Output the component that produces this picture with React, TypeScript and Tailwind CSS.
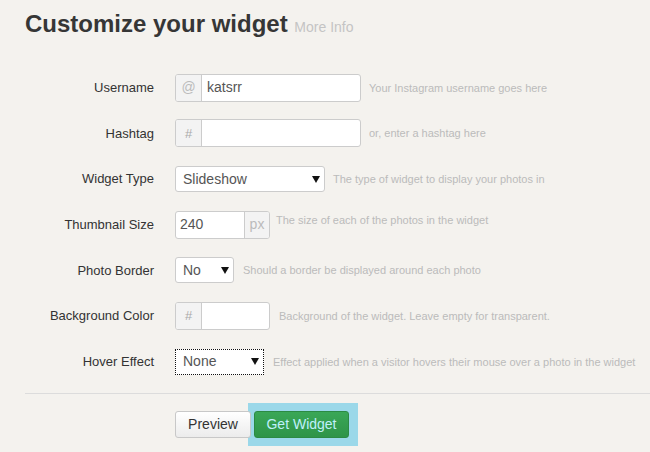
import React from "react";

const font = { fontFamily: '"Liberation Sans", Arial, sans-serif' };

function Arrow() {
  return (
    <svg width="8" height="7" viewBox="0 0 8 7" className="shrink-0">
      <path d="M0 0 H8 L4 7 Z" fill="#111" />
    </svg>
  );
}

function Row({ label, children }: { label: string; children: React.ReactNode }) {
  return (
    <div className="flex h-[45.67px] items-center">
      <div className="w-[129px] text-right text-[13px] text-[#333]">{label}</div>
      <div className="ml-[21px] flex items-center">{children}</div>
    </div>
  );
}

function Hint({ children, className = "" }: { children: React.ReactNode; className?: string }) {
  return <span className={"text-[11px] text-[#bbbbbb] " + className}>{children}</span>;
}

export default function App() {
  return (
    <div style={font} className="min-h-[452px] w-[650px] overflow-hidden bg-[#f4f2ee]">
      <div className="pl-[25px]">
        <h1 className="pt-[11px] text-[24px] font-bold leading-[26px] text-[#363636]">
          Customize your widget{" "}
          <span className="text-[14px] font-normal text-[#c4c4c4]">More Info</span>
        </h1>
        <div className="mt-[25px]">
          <Row label="Username">
            <div className="flex h-[28px] w-[186px] overflow-hidden rounded-[3px] border border-[#cccccc] bg-white">
              <div className="flex w-[26px] items-center justify-center border-r border-[#cccccc] bg-[#f3f3f3] text-[14px] text-[#bbbbbb]">@</div>
              <div className="flex items-center pl-[5px] text-[14px] text-[#555]">katsrr</div>
            </div>
            <Hint className="ml-[8px]">Your Instagram username goes here</Hint>
          </Row>
          <Row label="Hashtag">
            <div className="flex h-[28px] w-[186px] overflow-hidden rounded-[3px] border border-[#cccccc] bg-white">
              <div className="flex w-[26px] items-center justify-center border-r border-[#cccccc] bg-[#f3f3f3] text-[13px] text-[#aaaaaa]">#</div>
              <div className="flex-1" />
            </div>
            <Hint className="ml-[8px]">or, enter a hashtag here</Hint>
          </Row>
          <Row label="Widget Type">
            <div className="flex h-[26px] w-[150px] items-center justify-between rounded-[3px] border border-[#cccccc] bg-white pl-[7px] pr-[4px] text-[14px] text-[#555]">
              <span>Slideshow</span>
              <Arrow />
            </div>
            <Hint className="ml-[8px]">The type of widget to display your photos in</Hint>
          </Row>
          <Row label="Thumbnail Size">
            <div className="flex h-[28px] w-[95px] overflow-hidden rounded-[3px] border border-[#cccccc] bg-white">
              <div className="flex flex-1 items-center pl-[4px] text-[14px] text-[#555]">240</div>
              <div className="flex w-[25px] items-center justify-center border-l border-[#cccccc] bg-[#f3f3f3] text-[14px] text-[#bbbbbb]">px</div>
            </div>
            <Hint className="ml-[6px] -mt-[10px]">The size of each of the photos in the widget</Hint>
          </Row>
          <Row label="Photo Border">
            <div className="flex h-[26px] w-[59px] items-center justify-between rounded-[3px] border border-[#cccccc] bg-white pl-[7px] pr-[4px] text-[14px] text-[#555]">
              <span>No</span>
              <Arrow />
            </div>
            <Hint className="ml-[9px]">Should a border be displayed around each photo</Hint>
          </Row>
          <Row label="Background Color">
            <div className="flex h-[28px] w-[95px] overflow-hidden rounded-[3px] border border-[#cccccc] bg-white">
              <div className="flex w-[26px] items-center justify-center border-r border-[#cccccc] bg-[#f3f3f3] text-[13px] text-[#aaaaaa]">#</div>
              <div className="flex-1" />
            </div>
            <Hint className="ml-[9px]">Background of the widget. Leave empty for transparent.</Hint>
          </Row>
          <Row label="Hover Effect">
            <div className="flex h-[26px] w-[89px] items-center justify-between border border-dotted border-[#111] bg-white pl-[7px] pr-[4px] text-[14px] text-[#555]">
              <span>None</span>
              <Arrow />
            </div>
            <Hint className="ml-[9px]">Effect applied when a visitor hovers their mouse over a photo in the widget</Hint>
          </Row>
        </div>
        <div className="mt-[8px] h-px bg-[#dcdcdc]" />
        <div className="mt-[17px] flex pl-[150px]">
          <button className="relative z-10 h-[27px] w-[76px] rounded-[3px] border border-[#c8c8c8] bg-gradient-to-b from-white to-[#ececec] text-[14px] text-[#333]">
            Preview
          </button>
          <div className="relative ml-[3px]">
            <div className="absolute -left-[6px] -right-[9px] -top-[8px] -bottom-[8px] bg-[#9bd8e9]" />
            <button className="relative h-[27px] w-[95px] rounded-[3px] border border-[#2c8a43] bg-gradient-to-b from-[#3aa757] to-[#2e9448] text-[14px] text-[#bff0fb]">
              Get Widget
            </button>
          </div>
        </div>
      </div>
    </div>
  );
}
